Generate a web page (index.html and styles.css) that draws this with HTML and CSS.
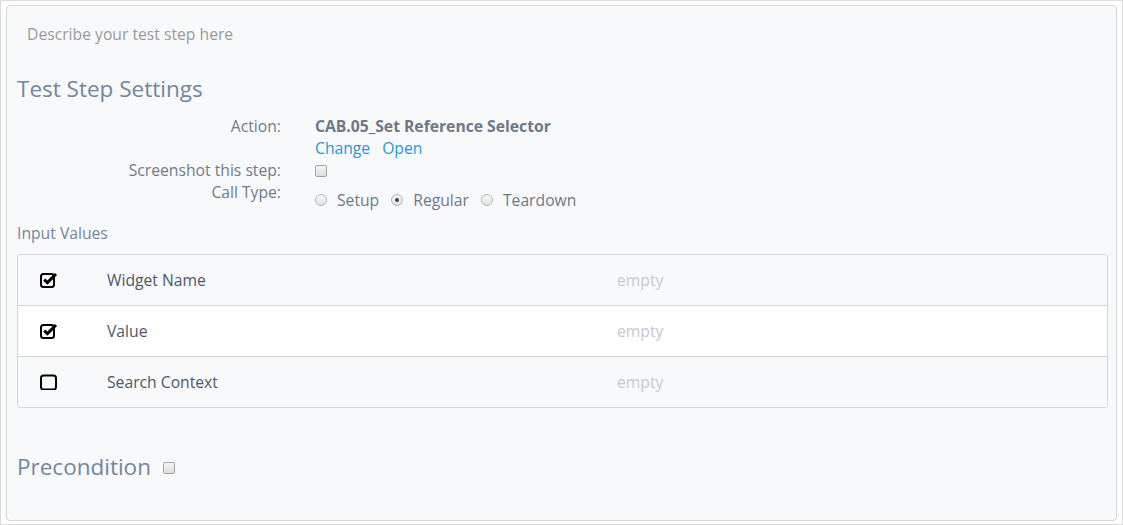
FILE: index.html
```html
<!DOCTYPE html>
<html>
<head>
<meta charset="utf-8">
<link rel="stylesheet" href="styles.css">
</head>
<body>
<div class="frame">
  <div class="panel">
    <div class="description">Describe your test step here</div>
    <h2 class="section-title">Test Step Settings</h2>
    <div class="settings">
      <div class="label">Action:</div>
      <div class="value">
        <div class="action-name">CAB.05_Set Reference Selector</div>
        <div class="links"><a class="link">Change</a><a class="link">Open</a></div>
      </div>
      <div class="label">Screenshot this step:</div>
      <div class="value"><span class="cb"></span></div>
      <div class="label">Call Type:</div>
      <div class="value radios">
        <span class="radio"></span><span class="radio-label">Setup</span>
        <span class="radio checked"></span><span class="radio-label">Regular</span>
        <span class="radio"></span><span class="radio-label">Teardown</span>
      </div>
    </div>
    <div class="sub-title">Input Values</div>
    <div class="table">
      <div class="row">
        <div class="cell-icon">
          <svg width="18" height="16" viewBox="0 0 18 16"><rect x="1" y="2" width="13" height="13" rx="2.5" fill="none" stroke="#000" stroke-width="2"/><path d="M4.2 7.6 L7.4 10.6 L16 2" fill="none" stroke="#000" stroke-width="3" stroke-linejoin="miter"/></svg>
        </div>
        <div class="cell-name">Widget Name</div>
        <div class="cell-value">empty</div>
      </div>
      <div class="row alt">
        <div class="cell-icon">
          <svg width="18" height="16" viewBox="0 0 18 16"><rect x="1" y="2" width="13" height="13" rx="2.5" fill="none" stroke="#000" stroke-width="2"/><path d="M4.2 7.6 L7.4 10.6 L16 2" fill="none" stroke="#000" stroke-width="3" stroke-linejoin="miter"/></svg>
        </div>
        <div class="cell-name">Value</div>
        <div class="cell-value">empty</div>
      </div>
      <div class="row">
        <div class="cell-icon">
          <svg width="18" height="16" viewBox="0 0 18 16"><rect x="1" y="1.5" width="15" height="14" rx="2.5" fill="none" stroke="#000" stroke-width="2"/></svg>
        </div>
        <div class="cell-name">Search Context</div>
        <div class="cell-value">empty</div>
      </div>
    </div>
    <div class="precondition">
      <h2 class="section-title inline">Precondition</h2>
      <span class="cb"></span>
    </div>
  </div>
</div>
</body>
</html>
```

FILE: styles.css
```css
* { box-sizing: border-box; }
html, body { margin: 0; padding: 0; background: #fff; }
body { font-family: "Open Sans", "Liberation Sans", sans-serif; }

.frame {
  width: 1123px;
  height: 525px;
  border: 1px solid #dcdcdc;
  padding: 4px 5px 3px 5px;
}

.panel {
  height: 100%;
  border: 1px solid #d6d6d6;
  border-radius: 4px;
  background: #f8f9fb;
  padding: 0 9px 0 10px;
}

.description {
  padding: 0 10px;
  margin-top: 17px;
  font-size: 15.7px;
  line-height: 22px;
  color: #9a9a9a;
}

.section-title {
  margin: 28px 0 0 0;
  font-weight: 400;
  font-size: 22.5px;
  line-height: 32px;
  color: #71869f;
}

.settings {
  display: grid;
  grid-template-columns: 264px 1fr;
  column-gap: 34px;
  margin-top: 10px;
  font-size: 15.7px;
  line-height: 22px;
}

.label {
  text-align: right;
  color: #707c88;
}

.value { color: #6c7a89; }

.action-name { font-weight: 700; color: #6b7887; }

.links { display: flex; gap: 12px; }
.link { color: #1b9ad6; }

.cb {
  display: inline-block;
  width: 12px;
  height: 12px;
  border: 1px solid #a3a3a3;
  border-radius: 2px;
  background: linear-gradient(#f4f4f4, #dedede);
  vertical-align: -1px;
}

.radios {
  display: flex;
  align-items: center;
  padding-top: 8px;
}
.radio {
  width: 12px;
  height: 12px;
  border-radius: 50%;
  border: 1px solid #b4b4b4;
  background: linear-gradient(#f6f6f6, #e2e2e2);
  margin-right: 10px;
  position: relative;
}
.radio.checked::after {
  content: "";
  position: absolute;
  left: 3px;
  top: 3px;
  width: 4px;
  height: 4px;
  border-radius: 50%;
  background: #444;
}
.radio-label { margin-right: 12px; color: #6c7a89; }

.sub-title {
  margin-top: 11px;
  font-size: 15.7px;
  line-height: 22px;
  color: #71869f;
}

.table {
  margin-top: 10px;
  border: 1px solid #d6d6d6;
  border-radius: 3px;
  width: 1091px;
  overflow: hidden;
}
.row {
  display: flex;
  align-items: center;
  height: 51px;
  background: #f8f9fb;
  border-top: 1px solid #d6d6d6;
  font-size: 15.7px;
  color: #4c5866;
}
.row:first-child { border-top: none; height: 50px; }
.row.alt { background: #fff; }
.cell-icon {
  width: 89px;
  padding-left: 22px;
  display: flex;
  align-items: center;
}
.cell-name { width: 510px; }
.cell-value { color: #c9c9c9; }

.precondition {
  display: flex;
  align-items: center;
  gap: 12px;
  margin-top: 43px;
}
.section-title.inline { margin: 0; }
.precondition .cb { margin-top: 2px; }
```
